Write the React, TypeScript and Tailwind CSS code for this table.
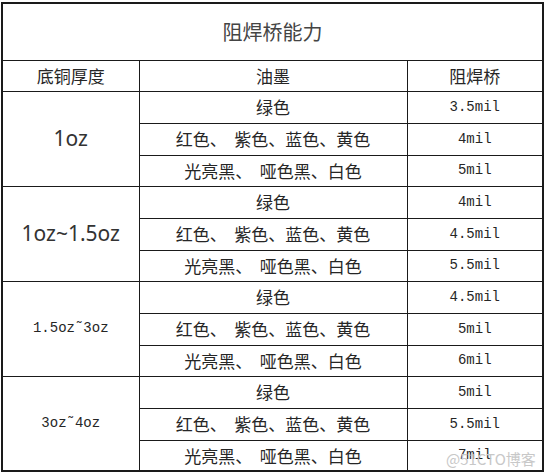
const groups = [
  { label: '1oz', sans: true, mils: ['3.5mil', '4mil', '5mil'] },
  { label: '1oz~1.5oz', sans: true, mils: ['4mil', '4.5mil', '5.5mil'] },
  { label: '1.5oz˜3oz', sans: false, mils: ['4.5mil', '5mil', '6mil'] },
  { label: '3oz˜4oz', sans: false, mils: ['5mil', '5.5mil', '7mil'] },
];

const inks = ['绿色', '红色、  紫色、蓝色、黄色', '光亮黑、  哑色黑、白色'];

const cjk = "font-['Noto_Sans_CJK_SC',sans-serif]";
const mono = "font-['Liberation_Mono','Noto_Sans_CJK_SC',monospace]";

export default function App() {
  return (
    <div className="relative min-h-[473px] w-[546px] bg-white pl-px pt-[2px] text-[#262626]">
      <table className="w-[543px] table-fixed border-collapse border-2 border-[#1a1a1a]">
        <colgroup>
          <col className="w-[137px]" />
          <col className="w-[268px]" />
          <col className="w-[136px]" />
        </colgroup>
        <tbody>
          {/* 标题 */}
          <tr className="h-[57px]">
            <td colSpan={3} className={`border border-[#1a1a1a] text-center text-[20px] text-[#444] ${cjk}`}>
              阻焊桥能力
            </td>
          </tr>
          {/* 表头 */}
          <tr className="h-[31px]">
            <td className={`border border-[#1a1a1a] text-center text-[17px] ${cjk}`}>底铜厚度</td>
            <td className={`border border-[#1a1a1a] text-center text-[17px] ${cjk}`}>油墨</td>
            <td className={`border border-[#1a1a1a] text-center text-[17px] ${cjk}`}>阻焊桥</td>
          </tr>
          {groups.map((g) =>
            g.mils.map((mil, i) => (
              <tr key={g.label + i} className={i === 2 ? 'h-[31px]' : 'h-[32px]'}>
                {i === 0 && (
                  <td
                    rowSpan={3}
                    className={
                      g.sans
                        ? "border border-[#1a1a1a] text-center text-[21px] text-[#333] font-['Noto_Sans',sans-serif]"
                        : `border border-[#1a1a1a] text-center text-[14px] ${mono}`
                    }
                  >
                    {g.label}
                  </td>
                )}
                <td className={`whitespace-pre border border-[#1a1a1a] text-center text-[17px] ${cjk}`}>{inks[i]}</td>
                <td className={`border border-[#1a1a1a] text-center text-[14px] ${mono}`}>{mil}</td>
              </tr>
            ))
          )}
        </tbody>
      </table>
      {/* 水印 */}
      <div className={`pointer-events-none absolute left-[446px] top-[448px] text-[15px] text-[#c8c8c8] ${cjk}`}>
        @51CTO博客
      </div>
    </div>
  );
}
